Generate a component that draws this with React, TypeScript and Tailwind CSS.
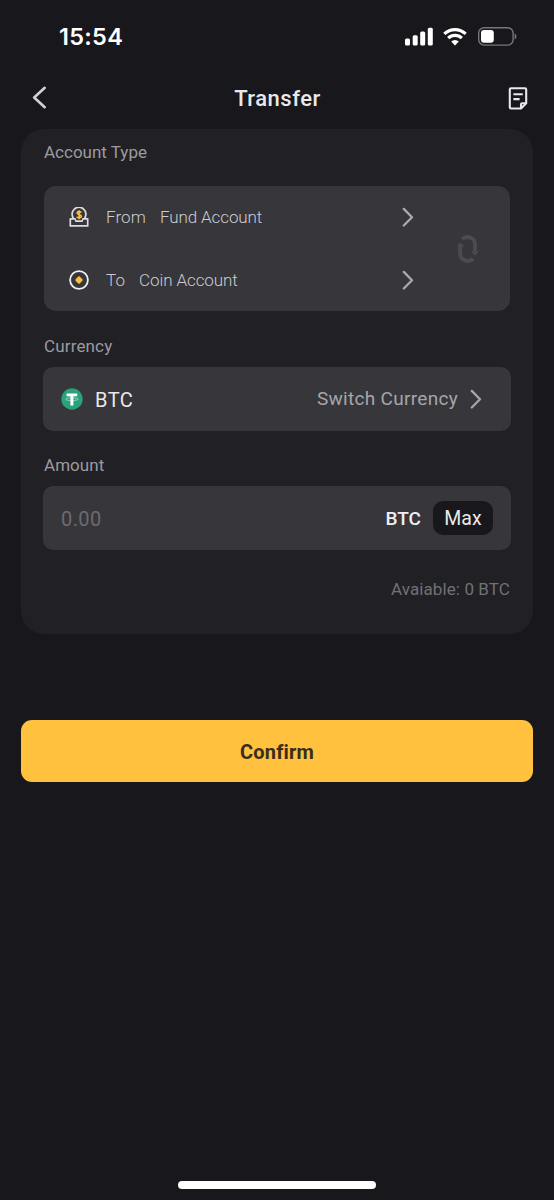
import React, { useState } from "react";

// Chevron used by the rows that open a picker
function Chevron({ className = "" }: { className?: string }) {
  return (
    <svg width="12" height="20" viewBox="0 0 12 20" fill="none" className={className}>
      <path d="M1.8 1.9 L10 10.2 L1.8 18.5" stroke="currentColor" strokeWidth="2.3" strokeLinecap="round" strokeLinejoin="round" />
    </svg>
  );
}

function StatusBar() {
  return (
    <div className="flex h-[72px] items-start justify-between pl-[59px] pr-[37px] text-white">
      <span className="pt-[23px] font-['Inter',sans-serif] text-[23.5px] font-semibold leading-7 tracking-[0.3px]">15:54</span>
      <div className="flex items-center pt-[27px]">
        <svg width="28" height="19" viewBox="0 0 28 19" fill="currentColor">
          <rect x="0" y="11.5" width="5" height="7" rx="1.5" />
          <rect x="7.7" y="8.3" width="5" height="10.2" rx="1.5" />
          <rect x="15.2" y="4.5" width="5" height="14" rx="1.5" />
          <rect x="22.8" y="0.8" width="5" height="17.7" rx="1.5" />
        </svg>
        <svg width="24" height="19" viewBox="0 0 24 19" fill="none" stroke="currentColor" strokeWidth="3.2" className="ml-[10px]">
          <path d="M1.3 6.8 A15.6 15.6 0 0 1 22.7 6.8" />
          <path d="M5.2 11.2 A9.8 9.8 0 0 1 18.8 11.2" />
          <path d="M8.2 14.5 A5.5 5.5 0 0 1 15.8 14.5 L12 18.4 Z" fill="currentColor" stroke="none" />
        </svg>
        <svg width="39" height="19" viewBox="0 0 39 19" fill="none" className="ml-[11px]">
          <rect x="0.7" y="0.7" width="34.4" height="17.4" rx="5.4" stroke="#77767b" strokeWidth="1.4" />
          <rect x="3" y="3" width="12.8" height="12.8" rx="3" fill="#fff" />
          <path d="M36.7 6.4 C39 7.2 39 11.6 36.7 12.4 Z" fill="#77767b" />
        </svg>
      </div>
    </div>
  );
}

function FundIcon() {
  return (
    <svg width="20" height="20" viewBox="0 0 20 20" fill="none">
      <path d="M4.4 11.2 A6.9 6.9 0 1 1 15.6 11.2" stroke="#dcdbe0" strokeWidth="1.7" />
      <path d="M6.2 11.8 H1.3 V18.9 H18.7 V11.8 H13.8 L13 14.2 H7 Z" fill="#37363b" stroke="#dcdbe0" strokeWidth="1.7" strokeLinejoin="round" />
      <path d="M6.9 10.8 H13.1 V12.9 H6.9 Z" fill="#37363b" />
      <path d="M12.2 5.6 C11.7 4.3 8.1 4.1 8.1 6.1 C8.1 8.1 12.3 7 12.3 9.2 C12.3 11.2 8.3 11 7.8 9.7 M10.1 3.3 V12.2" stroke="#fdc03b" strokeWidth="1.6" />
    </svg>
  );
}

function CoinIcon() {
  return (
    <svg width="20" height="20" viewBox="0 0 20 20" fill="none">
      <circle cx="10" cy="10" r="8.9" stroke="#efeef2" strokeWidth="1.8" />
      <path d="M10 7.3 L12.7 10 L10 12.7 L7.3 10 Z" fill="#fdc03b" stroke="#fdc03b" strokeWidth="2" strokeLinejoin="round" />
    </svg>
  );
}

function SwapIcon() {
  return (
    <svg width="22" height="28" viewBox="0 0 22 28" fill="none" stroke="#4c4b51" strokeWidth="3.8">
      <path d="M5 4.2 C10 -0.2 18 2.6 18 9.5 V17" />
      <path d="M16.2 23.8 C11.2 28.2 3.2 25.4 3.2 18.5 V11" />
      <path d="M14.8 16.8 H21.2 L18 20.2 Z" fill="#4c4b51" stroke="#4c4b51" strokeWidth="1" />
      <path d="M6.4 11.2 H0.6 L3.2 7.8 Z" fill="#4c4b51" stroke="#4c4b51" strokeWidth="1" />
    </svg>
  );
}

function TetherIcon() {
  return (
    <svg width="22" height="22" viewBox="0 0 22 22" fill="none">
      <circle cx="11" cy="11" r="10.7" fill="#2aa27b" />
      <ellipse cx="10.9" cy="11.2" rx="6.2" ry="1.4" stroke="#a9dccb" strokeWidth="0.8" />
      <path d="M5.6 5.4 H16.2 V8.2 H12.4 V17.6 H9.4 V8.2 H5.6 Z" fill="#fff" />
    </svg>
  );
}

const accounts = [
  { label: "From", name: "Fund Account", icon: <FundIcon /> },
  { label: "To", name: "Coin Account", icon: <CoinIcon /> },
];

export default function App() {
  const [amount, setAmount] = useState("");

  return (
    <div className="flex h-[1200px] w-[554px] flex-col overflow-hidden bg-[#18171b] font-['Roboto',sans-serif]">
      <StatusBar />

      {/* Header */}
      <header className="flex h-[57px] items-start justify-between pl-8 pr-[26px] text-[#e9e8ec]">
        <button aria-label="Back" className="mt-[14px]">
          <svg width="15" height="23" viewBox="0 0 15 23" fill="none" className="text-[#d2d1d6]">
            <path d="M12.7 1.8 L2.2 11.5 L12.7 21.2" stroke="currentColor" strokeWidth="2.6" strokeLinecap="round" strokeLinejoin="round" />
          </svg>
        </button>
        <h1 className="mt-[13px] text-[22px] font-medium leading-7 tracking-[0.5px]">Transfer</h1>
        <button aria-label="Records" className="mt-[15px]">
          <svg width="20" height="23" viewBox="0 0 20 23" fill="none" stroke="currentColor" strokeWidth="2.1" strokeLinejoin="round">
            <path d="M13 21.5 H3 Q1.8 21.5 1.8 20.3 V2.5 Q1.8 1.3 3 1.3 H17 Q18.2 1.3 18.2 2.5 V16.3 Z" />
            <path d="M13 21.5 V17.4 Q13 16.3 14.1 16.3 H18.2" />
            <path d="M5.4 7.3 H14.8 M5.4 12.1 H11.6" />
          </svg>
        </button>
      </header>

      {/* Transfer form */}
      <main className="mx-[21px] h-[505px] w-[512px] rounded-[23px] bg-[#212025] px-[22px] pt-[11px]">
        <p className="pl-px text-[17px] leading-6 text-[#9c9ba0]">Account Type</p>

        <div className="mx-px mt-[22px] flex h-[125px] items-center rounded-[12px] bg-[#37363b] pl-[25px] pr-[31px]">
          <div className="flex w-[345px] flex-col gap-[31px]">
            {accounts.map((account) => (
              <button key={account.label} className="flex h-8 items-center text-left text-[17px] font-light text-[#cccbd0]">
                {account.icon}
                <span className="ml-[17px] pt-0.5 tracking-[0.1px]">{account.label}</span>
                <span className="ml-[14px] pt-0.5 tracking-[-0.1px]">{account.name}</span>
                <Chevron className="ml-auto text-[#aaa9ae]" />
              </button>
            ))}
          </div>
          <button aria-label="Swap accounts" className="ml-auto">
            <SwapIcon />
          </button>
        </div>

        <p className="mt-[23px] pl-px text-[17px] leading-6 tracking-[0.15px] text-[#9c9ba0]">Currency</p>
        <button className="mt-[9px] flex h-16 w-full items-center rounded-[10px] bg-[#37363b] pl-[18px] pr-[29px]">
          <TetherIcon />
          <span className="ml-3 pt-px text-[20px] tracking-[0.5px] text-[#e9e8ec]">BTC</span>
          <span className="ml-auto pt-px text-[19px] tracking-[0.3px] text-[#a6a5aa]">Switch Currency</span>
          <Chevron className="ml-3 text-[#a6a5aa]" />
        </button>

        <p className="mt-[22px] pl-px text-[17px] leading-6 tracking-[0.05px] text-[#9c9ba0]">Amount</p>
        <div className="mt-[9px] flex h-16 items-center rounded-[10px] bg-[#37363b] pl-[18px] pr-[18px]">
          <input
            value={amount}
            onChange={(e) => setAmount(e.target.value)}
            placeholder="0.00"
            className="w-40 bg-transparent pt-0.5 text-[20px] tracking-[0.4px] text-white outline-none placeholder:text-[#6c6b70]"
          />
          <span className="ml-auto pt-[2px] text-[19px] font-medium text-[#efeef2]">BTC</span>
          <button onClick={() => setAmount("0")} className="ml-3 h-[34px] w-[60px] rounded-[10px] bg-[#18171b] pt-0.5 text-[19.5px] text-[#e9e8ec]">
            Max
          </button>
        </div>

        <p className="mt-[27px] pr-px text-right text-[17px] leading-6 tracking-[0.1px] text-[#717075]">Avaiable: 0 BTC</p>
      </main>

      <button className="mx-[21px] mt-[86px] h-[62px] w-[512px] rounded-[11px] bg-[#ffc13e] pt-px text-[20px] font-bold tracking-[0.2px] text-[#392d1b]">
        Confirm
      </button>

      {/* Home indicator */}
      <div className="mb-[11px] ml-[178px] mt-auto h-[8px] w-[198px] rounded-full bg-white" />
    </div>
  );
}
